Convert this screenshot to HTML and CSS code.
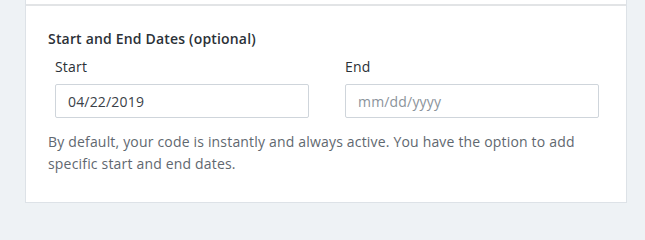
FILE: index.html
```html
<!DOCTYPE html>
<html lang="en">
<head>
<meta charset="utf-8">
<title>Start and End Dates</title>
<link rel="stylesheet" href="styles.css">
</head>
<body>
<div class="page">
  <div class="card">
    <div class="prev-section"></div>
    <div class="section">
      <h3 class="section-title">Start and End Dates (optional)</h3>
      <div class="date-row">
        <div class="field">
          <label class="field-label" for="start">Start</label>
          <input class="field-input" id="start" type="text" value="04/22/2019">
        </div>
        <div class="field">
          <label class="field-label" for="end">End</label>
          <input class="field-input" id="end" type="text" placeholder="mm/dd/yyyy">
        </div>
      </div>
      <p class="help-text">By default, your code is instantly and always active. You have the option to add specific start and end dates.</p>
    </div>
  </div>
</div>
</body>
</html>
```

FILE: styles.css
```css
* { box-sizing: border-box; }

html, body {
  margin: 0;
  padding: 0;
  background: #eef2f5;
  font-family: "Open Sans", "Liberation Sans", sans-serif;
  font-size: 14px;
  letter-spacing: 0.18px;
  color: #333a40;
}

.page {
  padding: 0 18px 0 25px;
  height: 209px;
}

.card {
  background: #ffffff;
  border: 1px solid #dde2e7;
  border-top: none;
  width: 602px;
}

.prev-section {
  height: 6px;
  border-bottom: 2px solid #e2e4e6;
}

.section {
  padding: 23px 22px 27px 22px;
}

.section-title {
  margin: 0 0 8px 0;
  font-size: 14px;
  line-height: 20px;
  font-weight: 600;
  color: #2b3137;
}

.date-row {
  display: grid;
  grid-template-columns: 254px 254px;
  column-gap: 36px;
  padding-left: 7px;
}

.field {
  display: flex;
  flex-direction: column;
}

.field-label {
  font-size: 14px;
  line-height: 20px;
  margin-bottom: 7px;
  color: #2b3137;
}

.field-input {
  height: 34px;
  width: 100%;
  border: 1px solid #cfd5db;
  border-radius: 2px;
  padding: 0 12px;
  font-family: "Open Sans", "Liberation Sans", sans-serif;
  font-size: 14px;
  letter-spacing: 0.18px;
  color: #3a4148;
  background: #fff;
  outline: none;
}

.field-input::placeholder {
  color: #8b939b;
}

.help-text {
  margin: 13px 0 0 0;
  font-size: 14px;
  line-height: 22px;
  color: #5f6870;
}
```
